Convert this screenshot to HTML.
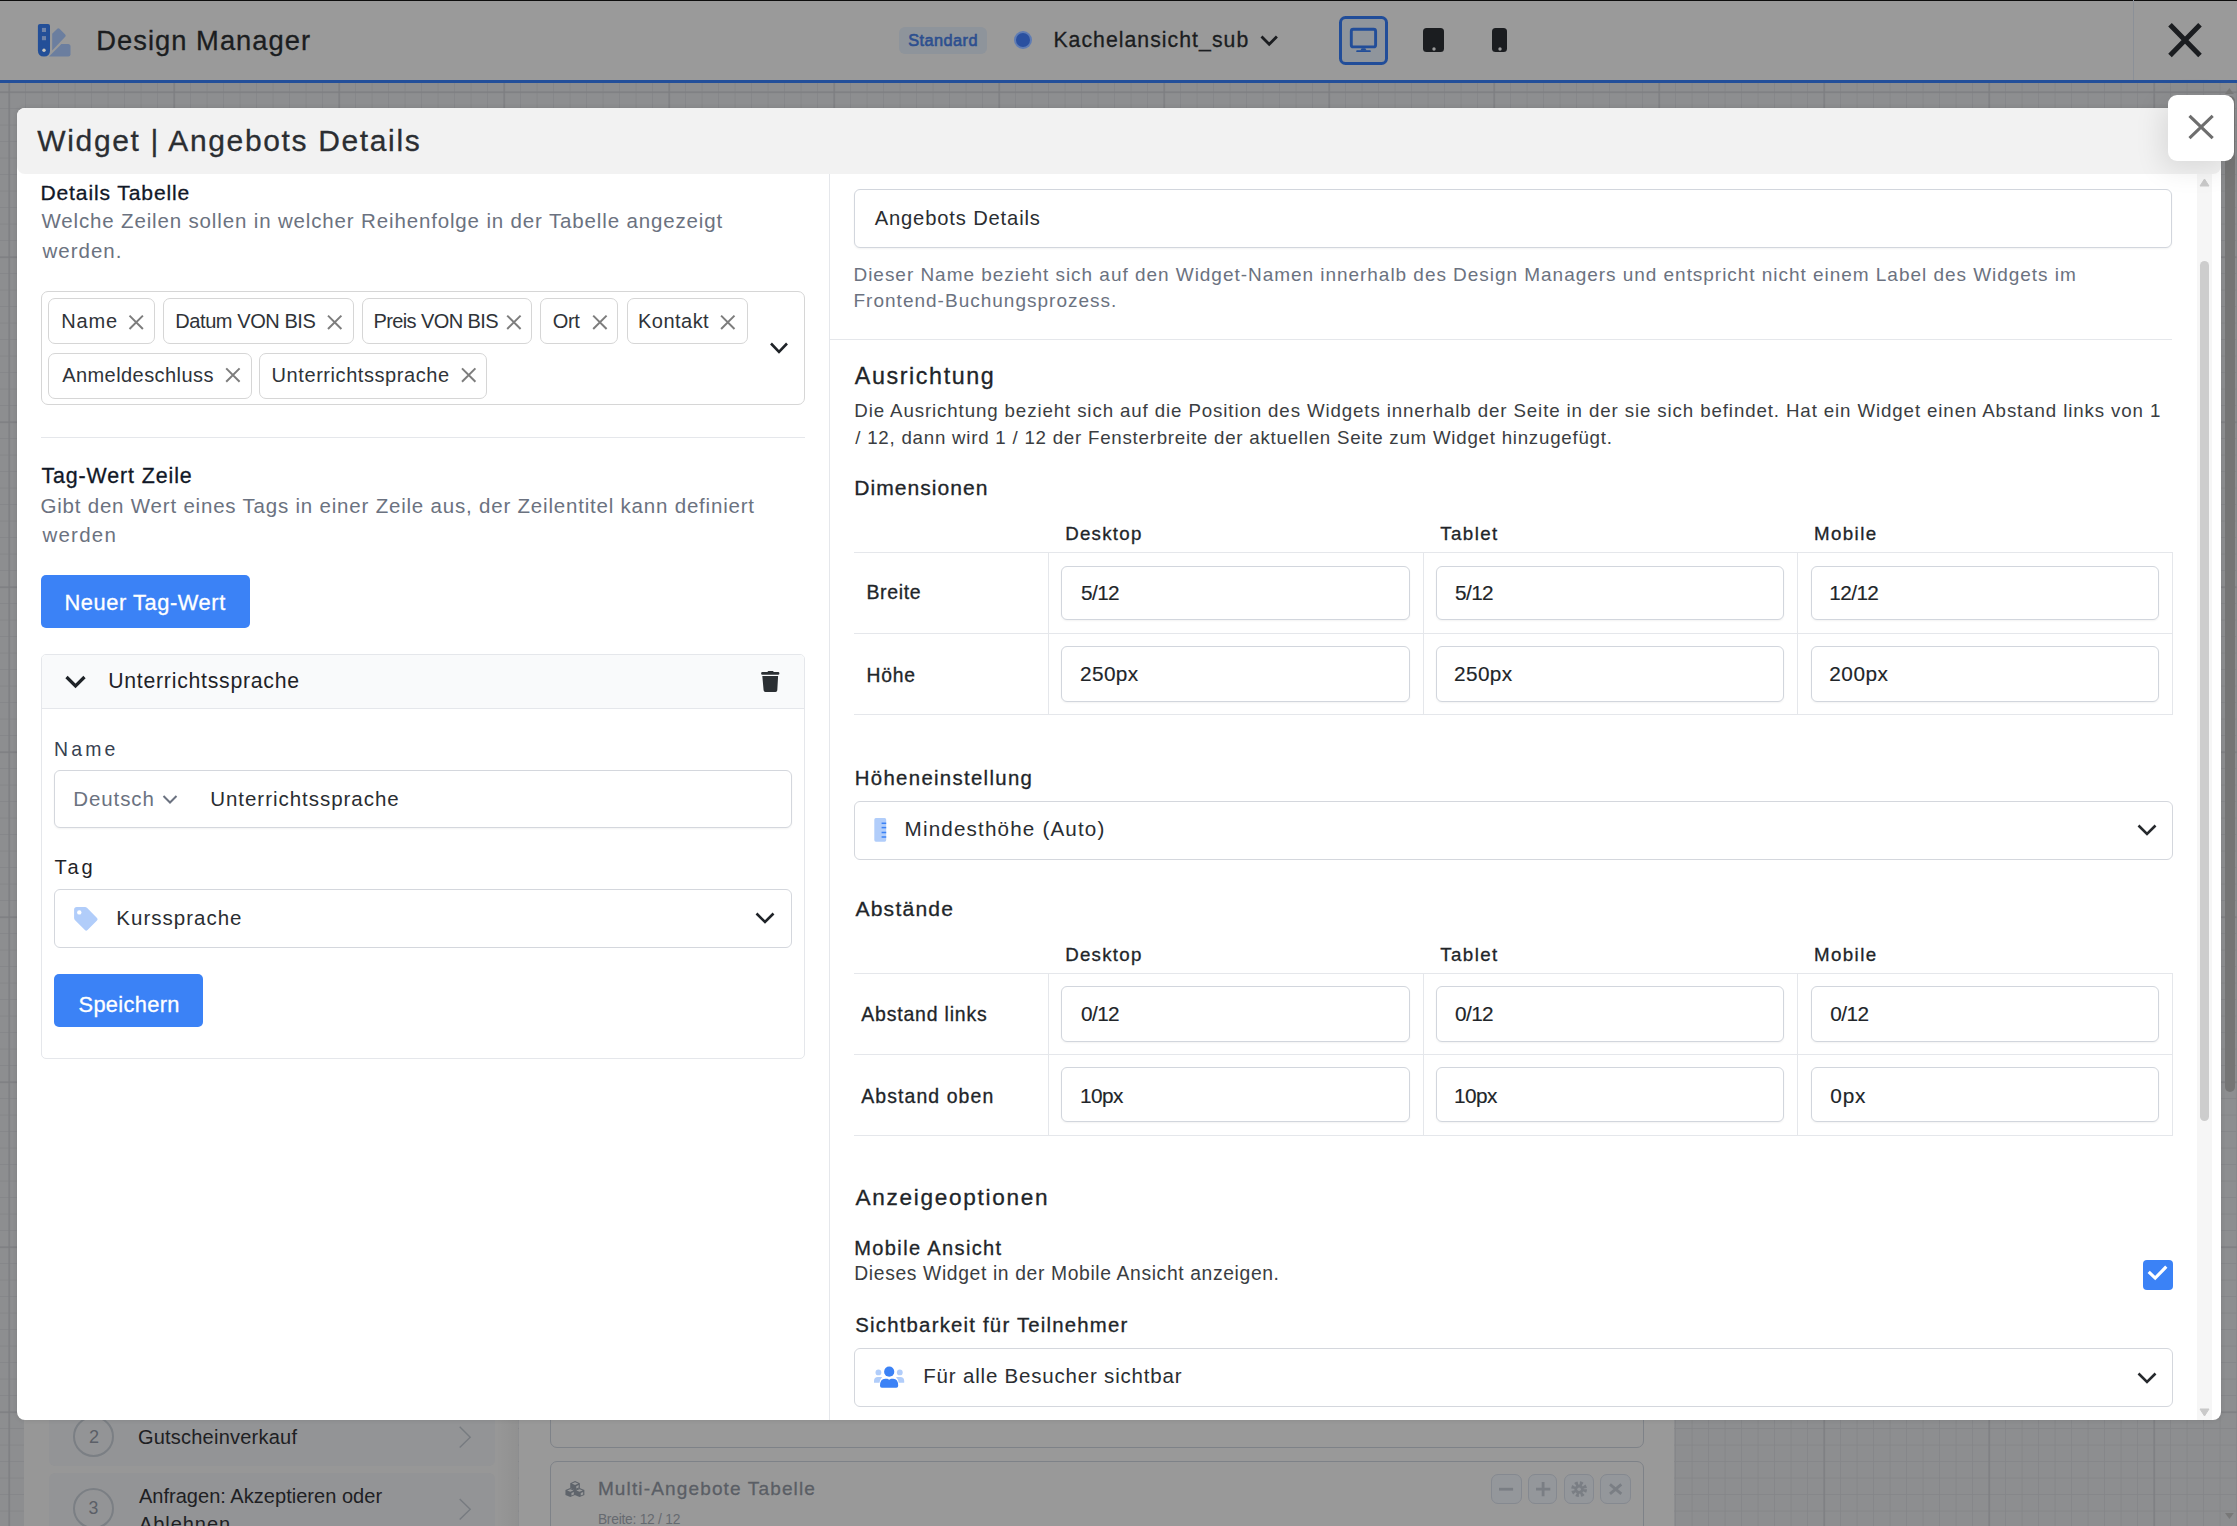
<!DOCTYPE html>
<html><head><meta charset="utf-8">
<style>
html,body{margin:0;padding:0;}
body{width:2237px;height:1526px;overflow:hidden;position:relative;background:#8d8e90;font-family:"Liberation Sans",sans-serif;}
.a{position:absolute;box-sizing:border-box;}
.t{position:absolute;white-space:nowrap;font-family:"Liberation Sans",sans-serif;}
svg{position:absolute;overflow:visible;}
.inp{position:absolute;box-sizing:border-box;background:#fff;border:1px solid #d2d6dd;border-radius:6px;box-shadow:0 1px 2px rgba(0,0,0,0.05);}
.chip{position:absolute;box-sizing:border-box;background:#fff;border:1px solid #d6d6d6;border-radius:7px;}
.hl{position:absolute;height:1px;background:#e5e7eb;}
.vl{position:absolute;width:1px;background:#e5e7eb;}
</style></head><body>
<!-- background grid -->
<svg width="2237" height="1526" style="left:0;top:0">
<defs>
<pattern id="gmin" x="8.6" y="91.6" width="16.5" height="16.5" patternUnits="userSpaceOnUse">
<rect x="0" y="0" width="1" height="16.5" fill="#858689"/>
<rect x="0" y="0" width="16.5" height="1" fill="#858689"/>
</pattern>
<pattern id="gmaj" x="8.6" y="91.6" width="165" height="165" patternUnits="userSpaceOnUse">
<rect x="0" y="0" width="1.2" height="165" fill="#7c7d80"/>
<rect x="0" y="0" width="165" height="1.2" fill="#7c7d80"/>
</pattern>
</defs>
<rect x="0" y="83" width="2237" height="1443" fill="url(#gmin)"/>
<rect x="0" y="83" width="2237" height="1443" fill="url(#gmaj)"/>
</svg>

<!-- background app panels (under overlay) -->
<div class="a" style="left:24px;top:110px;width:494px;height:1416px;background:#979797;"></div>
<div class="a" style="left:496px;top:110px;width:22px;height:1416px;background:linear-gradient(to right, rgba(0,0,0,0), rgba(0,0,0,0.045));"></div>
<div class="a" style="left:519px;top:110px;width:1155px;height:1416px;background:#999999;"></div>
<div class="a" style="left:48.8px;top:1380px;width:445.9px;height:85.8px;background:#939496;border-radius:6px;"></div>
<div class="a" style="left:48.8px;top:1473.3px;width:445.9px;height:100px;background:#939496;border-radius:6px;"></div>
<div class="a" style="left:73px;top:1416px;width:41px;height:41px;border:2.8px solid #7b7f84;border-radius:50%;"></div>
<div class="a" style="left:73px;top:1488px;width:41px;height:41px;border:2.8px solid #7b7f84;border-radius:50%;"></div>
<svg width="20" height="30" style="left:455px;top:1424px"><path d="M4.7 2.8 L15.2 13.2 L4.7 23.5" fill="none" stroke="#777b80" stroke-width="1.4"/></svg>
<svg width="20" height="30" style="left:455px;top:1496px"><path d="M4.7 3 L15.2 13.2 L4.7 23.4" fill="none" stroke="#777b80" stroke-width="1.4"/></svg>
<div class="a" style="left:549.8px;top:1300px;width:1093.9px;height:147.5px;border:1.3px solid #7e8288;border-radius:7px;"></div>
<div class="a" style="left:549.8px;top:1461px;width:1093.9px;height:120px;border:1.3px solid #7e8288;border-radius:7px;"></div>
<svg width="22" height="20" style="left:565px;top:1480px" viewBox="0 0 22 20"><path d="M10.05 1.00 L14.85 3.20 L14.85 8.00 L10.05 10.20 L5.25 8.00 L5.25 3.20 Z" fill="#5f646b"/><path d="M10.05 2.30 L13.25 3.60 L10.05 4.90 L6.85 3.60 Z M11.25 6.20 L13.65 5.10 L13.65 7.50 L11.25 8.60 Z" fill="#999a9b"/><path d="M5.25 7.90 L10.05 10.10 L10.05 14.90 L5.25 17.10 L0.45 14.90 L0.45 10.10 Z" fill="#5f646b"/><path d="M5.25 9.20 L8.45 10.50 L5.25 11.80 L2.05 10.50 Z M6.45 13.10 L8.85 12.00 L8.85 14.40 L6.45 15.50 Z" fill="#999a9b"/><path d="M14.55 7.90 L19.35 10.10 L19.35 14.90 L14.55 17.10 L9.75 14.90 L9.75 10.10 Z" fill="#5f646b"/><path d="M14.55 9.20 L17.75 10.50 L14.55 11.80 L11.35 10.50 Z M15.75 13.10 L18.15 12.00 L18.15 14.40 L15.75 15.50 Z" fill="#999a9b"/></svg>
<div class="a" style="left:1491.3px;top:1474px;width:30.4px;height:29.5px;border:1.3px solid #858990;border-radius:7px;background:#94979b;"></div>
<div class="a" style="left:1528.3px;top:1474px;width:29.2px;height:29.5px;border:1.3px solid #858990;border-radius:7px;background:#94979b;"></div>
<div class="a" style="left:1564.3px;top:1474px;width:29.5px;height:29.5px;border:1.3px solid #858990;border-radius:7px;background:#94979b;"></div>
<div class="a" style="left:1600.4px;top:1474px;width:30.4px;height:29.5px;border:1.3px solid #858990;border-radius:7px;background:#94979b;"></div>
<svg width="160" height="40" style="left:1480px;top:1470px">
<g stroke="#7a7e84" stroke-width="2.8" fill="none" stroke-linecap="butt">
<path d="M19 19.2 H33.1"/>
<path d="M63.1 12 V26.2 M56 19.1 H70.3"/>
<path d="M130 14.4 L141.3 23.8 M141.3 14.4 L130 23.8"/>
</g>
<circle cx="99.1" cy="19.2" r="5.6" fill="none" stroke="#7a7e84" stroke-width="4.6" stroke-dasharray="2.6 1.8"/>
<circle cx="99.1" cy="19.2" r="4.6" fill="#7a7e84"/>
<circle cx="99.1" cy="19.2" r="1.8" fill="#94979b"/>
</svg>

<!-- page scrollbar -->
<div class="a" style="left:2225px;top:96px;width:10px;height:996px;background:#757575;border-radius:5px;"></div>
<svg width="16" height="10" style="left:2221px;top:87px"><path d="M4 7 L8.4 1 L12.8 7 Z" fill="#787878"/></svg>
<svg width="16" height="10" style="left:2221px;top:1512px"><path d="M4 1 L8.4 7 L12.8 1 Z" fill="#787878"/></svg>

<!-- top header bar -->
<div class="a" style="left:0;top:0;width:2237px;height:80px;background:#9a9a9a;"></div>
<div class="a" style="left:0;top:0;width:2237px;height:1.4px;background:#0d0d0d;"></div>
<div class="a" style="left:0;top:80px;width:2237px;height:3px;background:#234f9a;"></div>
<div class="a" style="left:2133px;top:0;width:1px;height:80px;background:#8b9097;"></div>
<svg width="40" height="40" style="left:2165px;top:20px"><path d="M5 4.7 L35 35.4 M35 4.7 L5 35.4" stroke="#1b1d20" stroke-width="5" fill="none"/></svg>
<!-- logo -->
<svg width="40" height="40" style="left:35px;top:20px" viewBox="0 0 40 40">
<path d="M17.2 13.8 L22.3 8.7 Q23.4 7.6 24.5 8.7 L30.2 14.4 Q31.3 15.6 30.2 16.8 L17.2 30.6 Z" fill="#6b7e9f"/>
<path d="M26.4 24.1 L33 24.1 Q35.5 24.1 35.5 26.6 L35.5 34.2 Q35.5 36.4 33.3 36.4 L14 36.4 Z" fill="#6b7e9f"/>
<path d="M5 3.9 L13 3.9 Q15 3.9 15 5.9 L15 30.4 Q15 36.4 9 36.4 Q2.9 36.4 2.9 30.4 L2.9 5.9 Q2.9 3.9 5 3.9 Z" fill="#234f98"/>
<rect x="6.95" y="7.9" width="4.05" height="4.1" fill="#6f83a8"/>
<rect x="6.95" y="16.1" width="4.05" height="4.1" fill="#6f83a8"/>
<circle cx="9" cy="30.3" r="1.7" fill="#c9c6bd"/>
</svg>
<!-- standard badge, dot, dropdown -->
<div class="a" style="left:899.2px;top:27px;width:87.4px;height:26.6px;background:#8e949b;border-radius:6px;"></div>
<div class="a" style="left:1014.4px;top:31.2px;width:18px;height:18px;border-radius:50%;background:#5f7cb4;"></div>
<div class="a" style="left:1016.4px;top:33.2px;width:14px;height:14px;border-radius:50%;background:#2a50a0;"></div>
<svg width="24" height="16" style="left:1258px;top:33px"><path d="M3.5 3.5 L11.2 11.2 L18.9 3.5" fill="none" stroke="#1b1d20" stroke-width="2.8"/></svg>
<!-- device buttons -->
<div class="a" style="left:1339px;top:16px;width:49px;height:49px;border:3px solid #214d99;border-radius:6.5px;background:#8f959c;"></div>
<svg width="40" height="40" style="left:1344px;top:24px">
<rect x="7.3" y="5.3" width="24.3" height="17.6" rx="2" fill="none" stroke="#214d99" stroke-width="2.9"/>
<path d="M17.6 24.2 L21.3 24.2 L22.5 26.6 L16.4 26.6 Z" fill="#214d99"/>
<rect x="12.2" y="26.2" width="14.6" height="1.9" rx="0.9" fill="#214d99"/>
</svg>
<div class="a" style="left:1423px;top:28px;width:21px;height:24px;background:#1b1d20;border-radius:3.5px;"></div>
<svg width="10" height="10" style="left:1428.6px;top:44px"><circle cx="5" cy="5" r="1.7" fill="#9a9a9a"/></svg>
<div class="a" style="left:1492px;top:28px;width:15px;height:24px;background:#1b1d20;border-radius:3.5px;"></div>
<svg width="10" height="10" style="left:1494.5px;top:44px"><circle cx="5" cy="5" r="1.7" fill="#9a9a9a"/></svg>

<!-- modal -->
<div class="a" style="left:17px;top:108px;width:2204px;height:1312px;background:#fff;border-radius:8px;box-shadow:0 0 5px rgba(0,0,0,0.10);"></div>
<div class="a" style="left:17px;top:108px;width:2204px;height:65.5px;background:#f2f2f2;border-radius:8px;"></div>
<!-- modal right column divider -->
<div class="vl" style="left:829px;top:173.5px;height:1246.5px;"></div>
<!-- modal scrollbar -->
<div class="a" style="left:2197px;top:173.5px;width:15px;height:1246px;background:#f6f6f6;"></div>
<div class="a" style="left:2200px;top:261px;width:9px;height:860px;background:#cdcdcd;border-radius:4.5px;"></div>
<svg width="15" height="12" style="left:2197px;top:176px"><path d="M3 10 L7.5 3 L12 10 Z" fill="#c9c9c9" stroke="#c9c9c9" stroke-width="1" stroke-linejoin="round"/></svg>
<svg width="15" height="12" style="left:2197px;top:1406px"><path d="M3 3 L7.5 10 L12 3 Z" fill="#c9c9c9" stroke="#c9c9c9" stroke-width="1" stroke-linejoin="round"/></svg>

<!-- LEFT COLUMN -->
<div class="a" style="left:41.3px;top:291.3px;width:763.4px;height:114px;border:1px solid #d6d6d6;border-radius:7px;"></div>
<div class="chip" style="left:48.4px;top:298.4px;width:106.9px;height:46px;"></div>
<div class="chip" style="left:162.5px;top:298.4px;width:191.2px;height:46px;"></div>
<div class="chip" style="left:361.8px;top:298.4px;width:170.5px;height:46px;"></div>
<div class="chip" style="left:540.3px;top:298.4px;width:78.1px;height:46px;"></div>
<div class="chip" style="left:626.5px;top:298.4px;width:121.1px;height:46px;"></div>
<div class="chip" style="left:48.4px;top:352.6px;width:203.3px;height:46px;"></div>
<div class="chip" style="left:259.2px;top:352.6px;width:228.3px;height:46px;"></div>
<svg width="820" height="120" style="left:0;top:290px">
<g stroke="#7d7d7d" stroke-width="2" fill="none">
<path d="M129.5 25.6 L142.9 39 M142.9 25.6 L129.5 39"/>
<path d="M328 25.6 L341.4 39 M341.4 25.6 L328 39"/>
<path d="M507.2 25.6 L520.6 39 M520.6 25.6 L507.2 39"/>
<path d="M593.2 25.6 L606.6 39 M606.6 25.6 L593.2 39"/>
<path d="M721.1 25.6 L734.5 39 M734.5 25.6 L721.1 39"/>
<path d="M226.2 78.4 L239.6 91.8 M239.6 78.4 L226.2 91.8"/>
<path d="M462 78.4 L475.4 91.8 M475.4 78.4 L462 91.8"/>
</g>
<path d="M771 53.5 L779 61.8 L787 53.5" fill="none" stroke="#1f2328" stroke-width="2.6"/>
</svg>
<div class="hl" style="left:41px;top:437px;width:764px;"></div>
<div class="a" style="left:41px;top:575.3px;width:209px;height:53.1px;background:#3b82f6;border-radius:5px;"></div>
<!-- accordion -->
<div class="a" style="left:41.4px;top:654.3px;width:763.2px;height:405px;border:1px solid #e5e7eb;border-radius:5px;"></div>
<div class="a" style="left:42.4px;top:655.3px;width:761.2px;height:54px;background:#f9fafb;border-bottom:1px solid #e5e7eb;border-radius:4px 4px 0 0;"></div>
<svg width="30" height="20" style="left:60px;top:672px"><path d="M6.5 5 L15.5 14 L24.5 5" fill="none" stroke="#1f2328" stroke-width="3.2"/></svg>
<svg width="24" height="26" style="left:758px;top:669px" viewBox="0 0 24 26">
<path d="M9.3 3.1 L10.3 2.1 L14.9 2.1 L15.9 3.1 L20.1 3.1 Q21.4 3.1 21.4 4.4 Q21.4 5.75 20.1 5.75 L4.4 5.75 Q3.1 5.75 3.1 4.4 Q3.1 3.1 4.4 3.1 Z" fill="#2b2f33"/>
<path d="M4.3 7.1 L20.1 7.1 L19.3 21.3 Q19.2 23 17.5 23 L7.4 23 Q5.7 23 5.6 21.3 Z" fill="#2b2f33"/>
</svg>
<div class="inp" style="left:54.2px;top:770px;width:737.6px;height:58.3px;border-color:#d4d7dd;"></div>
<svg width="20" height="14" style="left:160px;top:792px"><path d="M3.5 4 L10 10.5 L16.5 4" fill="none" stroke="#6b7280" stroke-width="2"/></svg>
<div class="inp" style="left:54.2px;top:889.3px;width:737.6px;height:58.9px;border-color:#d4d7dd;box-shadow:none;"></div>
<svg width="28" height="28" style="left:72px;top:905px" viewBox="0 0 28 28">
<path d="M2.1 4.8 Q2.1 2.1 4.8 2.1 L12.9 2.1 Q14.2 2.1 15.2 3.1 L25 12.9 Q26.3 14.2 25 15.5 L15.5 25 Q14.2 26.3 12.9 25 L3.1 15.2 Q2.1 14.2 2.1 12.9 Z" fill="#b1cdfa"/>
<circle cx="7.3" cy="7.4" r="2.2" fill="#fff"/>
</svg>
<svg width="26" height="16" style="left:752px;top:910px"><path d="M4.5 3.5 L13 12 L21.5 3.5" fill="none" stroke="#1f2328" stroke-width="2.6"/></svg>
<div class="a" style="left:54.2px;top:974.1px;width:148.6px;height:53.2px;background:#3b82f6;border-radius:5px;"></div>

<!-- RIGHT COLUMN -->
<div class="inp" style="left:854.3px;top:189.4px;width:1318.2px;height:58.2px;"></div>
<div class="hl" style="left:829px;top:339px;width:1343px;"></div>
<!-- table 1 -->
<div class="hl" style="left:854px;top:552.3px;width:1318.5px;"></div>
<div class="hl" style="left:854px;top:633.2px;width:1318.5px;"></div>
<div class="hl" style="left:854px;top:714.2px;width:1318.5px;"></div>
<div class="vl" style="left:1047.7px;top:552.3px;height:162.4px;"></div>
<div class="vl" style="left:1423.2px;top:552.3px;height:162.4px;"></div>
<div class="vl" style="left:1796.9px;top:552.3px;height:162.4px;"></div>
<div class="vl" style="left:2171.8px;top:552.3px;height:162.4px;"></div>
<div class="inp" style="left:1061.2px;top:565.7px;width:349.2px;height:54.7px;"></div>
<div class="inp" style="left:1436px;top:565.7px;width:348.4px;height:54.7px;"></div>
<div class="inp" style="left:1811px;top:565.7px;width:348.4px;height:54.7px;"></div>
<div class="inp" style="left:1061.2px;top:646.4px;width:349.2px;height:55.2px;"></div>
<div class="inp" style="left:1436px;top:646.4px;width:348.4px;height:55.2px;"></div>
<div class="inp" style="left:1811px;top:646.4px;width:348.4px;height:55.2px;"></div>
<!-- hoeheneinstellung select -->
<div class="inp" style="left:854.2px;top:800.5px;width:1318.8px;height:59.2px;border-color:#d4d7dd;box-shadow:none;"></div>
<svg width="16" height="28" style="left:872px;top:816px" viewBox="0 0 16 28">
<rect x="2.3" y="2.1" width="11.9" height="23.6" rx="1.6" fill="#b1cdfa"/>
<g fill="#3b82f6"><rect x="9.6" y="6.55" width="4.6" height="1.5"/><rect x="9.6" y="10.85" width="4.6" height="1.5"/><rect x="9.6" y="15.75" width="4.6" height="1.5"/><rect x="9.6" y="20.25" width="4.6" height="1.5"/></g>
</svg>
<svg width="26" height="16" style="left:2134px;top:822px"><path d="M4.5 3.5 L13 12 L21.5 3.5" fill="none" stroke="#26292d" stroke-width="2.6"/></svg>
<!-- table 2 -->
<div class="hl" style="left:854px;top:973px;width:1318.5px;"></div>
<div class="hl" style="left:854px;top:1054px;width:1318.5px;"></div>
<div class="hl" style="left:854px;top:1134.8px;width:1318.5px;"></div>
<div class="vl" style="left:1047.7px;top:973px;height:162.4px;"></div>
<div class="vl" style="left:1423.2px;top:973px;height:162.4px;"></div>
<div class="vl" style="left:1796.9px;top:973px;height:162.4px;"></div>
<div class="vl" style="left:2171.8px;top:973px;height:162.4px;"></div>
<div class="inp" style="left:1061.2px;top:986.4px;width:349.2px;height:55.4px;"></div>
<div class="inp" style="left:1436px;top:986.4px;width:348.4px;height:55.4px;"></div>
<div class="inp" style="left:1811px;top:986.4px;width:348.4px;height:55.4px;"></div>
<div class="inp" style="left:1061.2px;top:1067.1px;width:349.2px;height:55.4px;"></div>
<div class="inp" style="left:1436px;top:1067.1px;width:348.4px;height:55.4px;"></div>
<div class="inp" style="left:1811px;top:1067.1px;width:348.4px;height:55.4px;"></div>
<!-- checkbox -->
<div class="a" style="left:2143.1px;top:1260.2px;width:29.5px;height:29.5px;background:#3b82f6;border-radius:4px;"></div>
<svg width="30" height="30" style="left:2143.1px;top:1260.2px"><path d="M5.7 11.9 L12.2 18.1 L23.3 6.7" fill="none" stroke="#fff" stroke-width="3.2"/></svg>
<!-- sichtbarkeit select -->
<div class="inp" style="left:854.2px;top:1347.7px;width:1318.8px;height:59.5px;border-color:#d4d7dd;box-shadow:none;"></div>
<svg width="34" height="24" style="left:872px;top:1365px" viewBox="0 0 34 24">
<g fill="#b1cdfa"><circle cx="6.4" cy="7.4" r="2.9"/><circle cx="27.8" cy="7.4" r="2.9"/>
<path d="M2 17.7 L2 16 Q2 12.1 6 12.1 L10.2 12.1 Q8 14.5 7.5 17.7 Z"/>
<path d="M32.2 17.7 L32.2 16 Q32.2 12.1 28.2 12.1 L24 12.1 Q26.2 14.5 26.7 17.7 Z"/></g>
<g fill="#3b82f6"><circle cx="17.2" cy="6.7" r="5.1"/>
<path d="M8 20.8 Q8 13.7 13.2 13.7 L15.4 13.7 L17.2 14.7 L19 13.7 L21.2 13.7 Q26.2 13.7 26.2 20.8 Q26.2 22.7 24.3 22.7 L9.9 22.7 Q8 22.7 8 20.8 Z"/></g>
</svg>
<svg width="26" height="16" style="left:2134px;top:1370px"><path d="M4.5 3.5 L13 12 L21.5 3.5" fill="none" stroke="#26292d" stroke-width="2.6"/></svg>

<!-- close button -->
<div class="a" style="left:2168px;top:94.5px;width:66px;height:66px;background:#fff;border-radius:9px;box-shadow:-6px 8px 28px rgba(0,0,0,0.10);"></div>
<svg width="40" height="40" style="left:2181px;top:107px"><path d="M9.6 9.9 L30.6 30.1 M30.6 9.9 L9.6 30.1" stroke="#6e6e6e" stroke-width="3.1" fill="none" stroke-linecap="square"/></svg>

<div class="t" style="left:96.30px;top:26.67px;font-size:27.33px;line-height:27.33px;color:#1b1d20;letter-spacing:1.022px;-webkit-text-stroke:0.3px #1b1d20;">Design Manager</div>
<div class="t" style="left:908.30px;top:32.01px;font-size:16.34px;line-height:16.34px;color:#2c4f8f;letter-spacing:0.416px;-webkit-text-stroke:0.6px #2c4f8f;">Standard</div>
<div class="t" style="left:1053.40px;top:29.85px;font-size:21.24px;line-height:21.24px;color:#1b1d20;letter-spacing:1.035px;-webkit-text-stroke:0.3px #1b1d20;">Kachelansicht_sub</div>
<div class="t" style="left:37.30px;top:126.09px;font-size:30.01px;line-height:30.01px;color:#2b2e32;letter-spacing:1.644px;-webkit-text-stroke:0.3px #2b2e32;">Widget | Angebots Details</div>
<div class="t" style="left:40.40px;top:182.07px;font-size:21.09px;line-height:21.09px;color:#111827;letter-spacing:0.875px;-webkit-text-stroke:0.3px #111827;">Details Tabelle</div>
<div class="t" style="left:41.40px;top:211.17px;font-size:20.5px;line-height:20.5px;color:#6b7280;letter-spacing:0.851px;">Welche Zeilen sollen in welcher Reihenfolge in der Tabelle angezeigt</div>
<div class="t" style="left:42.40px;top:240.77px;font-size:20.5px;line-height:20.5px;color:#6b7280;letter-spacing:1.027px;">werden.</div>
<div class="t" style="left:61.20px;top:311.26px;font-size:20.05px;line-height:20.05px;color:#2f3338;letter-spacing:0.802px;">Name</div>
<div class="t" style="left:175.30px;top:311.26px;font-size:20.05px;line-height:20.05px;color:#2f3338;letter-spacing:-0.439px;">Datum VON BIS</div>
<div class="t" style="left:373.40px;top:311.26px;font-size:20.05px;line-height:20.05px;color:#2f3338;letter-spacing:-0.600px;">Preis VON BIS</div>
<div class="t" style="left:552.80px;top:311.26px;font-size:20.05px;line-height:20.05px;color:#2f3338;letter-spacing:-0.376px;">Ort</div>
<div class="t" style="left:638.00px;top:311.26px;font-size:20.05px;line-height:20.05px;color:#2f3338;letter-spacing:0.456px;">Kontakt</div>
<div class="t" style="left:62.20px;top:364.86px;font-size:20.05px;line-height:20.05px;color:#2f3338;letter-spacing:0.413px;">Anmeldeschluss</div>
<div class="t" style="left:271.60px;top:364.86px;font-size:20.05px;line-height:20.05px;color:#2f3338;letter-spacing:0.555px;">Unterrichtssprache</div>
<div class="t" style="left:41.40px;top:466.02px;font-size:21.39px;line-height:21.39px;color:#111827;letter-spacing:0.901px;-webkit-text-stroke:0.3px #111827;">Tag-Wert Zeile</div>
<div class="t" style="left:40.40px;top:496.27px;font-size:20.5px;line-height:20.5px;color:#6b7280;letter-spacing:0.800px;">Gibt den Wert eines Tags in einer Zeile aus, der Zeilentitel kann definiert</div>
<div class="t" style="left:42.40px;top:525.18px;font-size:20.5px;line-height:20.5px;color:#6b7280;letter-spacing:1.253px;">werden</div>
<div class="t" style="left:64.40px;top:591.84px;font-size:21.84px;line-height:21.84px;color:#ffffff;letter-spacing:0.585px;-webkit-text-stroke:0.3px #ffffff;">Neuer Tag-Wert</div>
<div class="t" style="left:108.20px;top:670.55px;font-size:21.24px;line-height:21.24px;color:#1f2328;letter-spacing:0.748px;">Unterrichtssprache</div>
<div class="t" style="left:54.00px;top:740.16px;font-size:19.46px;line-height:19.46px;color:#374151;letter-spacing:3.154px;">Name</div>
<div class="t" style="left:73.20px;top:789.38px;font-size:20.5px;line-height:20.5px;color:#6b7280;letter-spacing:0.916px;">Deutsch</div>
<div class="t" style="left:210.20px;top:789.38px;font-size:20.5px;line-height:20.5px;color:#2a2d31;letter-spacing:0.968px;">Unterrichtssprache</div>
<div class="t" style="left:54.60px;top:857.36px;font-size:20.05px;line-height:20.05px;color:#1f2328;letter-spacing:2.922px;">Tag</div>
<div class="t" style="left:116.30px;top:908.28px;font-size:20.5px;line-height:20.5px;color:#2a2d31;letter-spacing:1.012px;">Kurssprache</div>
<div class="t" style="left:78.50px;top:994.14px;font-size:21.84px;line-height:21.84px;color:#ffffff;letter-spacing:0.331px;-webkit-text-stroke:0.3px #ffffff;">Speichern</div>
<div class="t" style="left:874.70px;top:208.43px;font-size:20.2px;line-height:20.2px;color:#2a2d31;letter-spacing:0.838px;">Angebots Details</div>
<div class="t" style="left:853.50px;top:264.64px;font-size:19.01px;line-height:19.01px;color:#6b7280;letter-spacing:0.964px;">Dieser Name bezieht sich auf den Widget-Namen innerhalb des Design Managers und entspricht nicht einem Label des Widgets im</div>
<div class="t" style="left:853.50px;top:291.24px;font-size:19.01px;line-height:19.01px;color:#6b7280;letter-spacing:1.008px;">Frontend-Buchungsprozess.</div>
<div class="t" style="left:854.80px;top:365.18px;font-size:23.32px;line-height:23.32px;color:#212529;letter-spacing:1.586px;-webkit-text-stroke:0.3px #212529;">Ausrichtung</div>
<div class="t" style="left:854.30px;top:401.79px;font-size:18.72px;line-height:18.72px;color:#3a3d41;letter-spacing:0.881px;">Die Ausrichtung bezieht sich auf die Position des Widgets innerhalb der Seite in der sie sich befindet. Hat ein Widget einen Abstand links von 1</div>
<div class="t" style="left:855.30px;top:428.89px;font-size:18.72px;line-height:18.72px;color:#3a3d41;letter-spacing:0.761px;">/ 12, dann wird 1 / 12 der Fensterbreite der aktuellen Seite zum Widget hinzugefügt.</div>
<div class="t" style="left:854.20px;top:476.97px;font-size:21.09px;line-height:21.09px;color:#212529;letter-spacing:1.020px;-webkit-text-stroke:0.3px #212529;">Dimensionen</div>
<div class="t" style="left:1065.20px;top:524.99px;font-size:18.72px;line-height:18.72px;color:#212529;letter-spacing:1.248px;-webkit-text-stroke:0.3px #212529;">Desktop</div>
<div class="t" style="left:1440.20px;top:524.99px;font-size:18.72px;line-height:18.72px;color:#212529;letter-spacing:1.438px;-webkit-text-stroke:0.3px #212529;">Tablet</div>
<div class="t" style="left:1813.90px;top:524.99px;font-size:18.72px;line-height:18.72px;color:#212529;letter-spacing:1.441px;-webkit-text-stroke:0.3px #212529;">Mobile</div>
<div class="t" style="left:866.40px;top:583.36px;font-size:19.46px;line-height:19.46px;color:#212529;letter-spacing:0.687px;-webkit-text-stroke:0.3px #212529;">Breite</div>
<div class="t" style="left:1081.00px;top:582.52px;font-size:20.8px;line-height:20.8px;color:#212529;letter-spacing:-0.600px;-webkit-text-stroke:0.15px #212529;">5/12</div>
<div class="t" style="left:1455.00px;top:582.52px;font-size:20.8px;line-height:20.8px;color:#212529;letter-spacing:-0.600px;-webkit-text-stroke:0.15px #212529;">5/12</div>
<div class="t" style="left:1829.30px;top:582.52px;font-size:20.8px;line-height:20.8px;color:#212529;letter-spacing:-0.600px;-webkit-text-stroke:0.15px #212529;">12/12</div>
<div class="t" style="left:866.40px;top:665.59px;font-size:19.31px;line-height:19.31px;color:#212529;letter-spacing:0.800px;-webkit-text-stroke:0.3px #212529;">Höhe</div>
<div class="t" style="left:1080.00px;top:664.42px;font-size:20.8px;line-height:20.8px;color:#212529;letter-spacing:0.384px;-webkit-text-stroke:0.15px #212529;">250px</div>
<div class="t" style="left:1454.00px;top:664.42px;font-size:20.8px;line-height:20.8px;color:#212529;letter-spacing:0.384px;-webkit-text-stroke:0.15px #212529;">250px</div>
<div class="t" style="left:1829.30px;top:664.42px;font-size:20.8px;line-height:20.8px;color:#212529;letter-spacing:0.509px;-webkit-text-stroke:0.15px #212529;">200px</div>
<div class="t" style="left:854.80px;top:768.30px;font-size:20.35px;line-height:20.35px;color:#212529;letter-spacing:1.326px;-webkit-text-stroke:0.3px #212529;">Höheneinstellung</div>
<div class="t" style="left:904.60px;top:819.25px;font-size:20.65px;line-height:20.65px;color:#2a2d31;letter-spacing:1.155px;">Mindesthöhe (Auto)</div>
<div class="t" style="left:855.40px;top:897.77px;font-size:21.09px;line-height:21.09px;color:#212529;letter-spacing:1.222px;-webkit-text-stroke:0.3px #212529;">Abstände</div>
<div class="t" style="left:1065.20px;top:946.19px;font-size:18.72px;line-height:18.72px;color:#212529;letter-spacing:1.248px;-webkit-text-stroke:0.3px #212529;">Desktop</div>
<div class="t" style="left:1440.20px;top:946.19px;font-size:18.72px;line-height:18.72px;color:#212529;letter-spacing:1.438px;-webkit-text-stroke:0.3px #212529;">Tablet</div>
<div class="t" style="left:1813.90px;top:946.19px;font-size:18.72px;line-height:18.72px;color:#212529;letter-spacing:1.441px;-webkit-text-stroke:0.3px #212529;">Mobile</div>
<div class="t" style="left:861.30px;top:1004.96px;font-size:19.46px;line-height:19.46px;color:#212529;letter-spacing:0.817px;-webkit-text-stroke:0.3px #212529;">Abstand links</div>
<div class="t" style="left:1081.00px;top:1003.82px;font-size:20.8px;line-height:20.8px;color:#212529;letter-spacing:-0.600px;-webkit-text-stroke:0.15px #212529;">0/12</div>
<div class="t" style="left:1455.00px;top:1003.82px;font-size:20.8px;line-height:20.8px;color:#212529;letter-spacing:-0.600px;-webkit-text-stroke:0.15px #212529;">0/12</div>
<div class="t" style="left:1830.30px;top:1003.82px;font-size:20.8px;line-height:20.8px;color:#212529;letter-spacing:-0.600px;-webkit-text-stroke:0.15px #212529;">0/12</div>
<div class="t" style="left:861.30px;top:1086.96px;font-size:19.46px;line-height:19.46px;color:#212529;letter-spacing:1.086px;-webkit-text-stroke:0.3px #212529;">Abstand oben</div>
<div class="t" style="left:1080.00px;top:1085.82px;font-size:20.8px;line-height:20.8px;color:#212529;letter-spacing:-0.600px;-webkit-text-stroke:0.15px #212529;">10px</div>
<div class="t" style="left:1454.00px;top:1085.82px;font-size:20.8px;line-height:20.8px;color:#212529;letter-spacing:-0.600px;-webkit-text-stroke:0.15px #212529;">10px</div>
<div class="t" style="left:1830.30px;top:1085.82px;font-size:20.8px;line-height:20.8px;color:#212529;letter-spacing:0.784px;-webkit-text-stroke:0.15px #212529;">0px</div>
<div class="t" style="left:855.50px;top:1187.01px;font-size:22.58px;line-height:22.58px;color:#212529;letter-spacing:1.710px;-webkit-text-stroke:0.3px #212529;">Anzeigeoptionen</div>
<div class="t" style="left:854.30px;top:1237.66px;font-size:20.05px;line-height:20.05px;color:#212529;letter-spacing:1.362px;-webkit-text-stroke:0.3px #212529;">Mobile Ansicht</div>
<div class="t" style="left:854.30px;top:1264.29px;font-size:19.31px;line-height:19.31px;color:#3a3d41;letter-spacing:0.632px;">Dieses Widget in der Mobile Ansicht anzeigen.</div>
<div class="t" style="left:855.30px;top:1315.40px;font-size:20.35px;line-height:20.35px;color:#212529;letter-spacing:1.213px;-webkit-text-stroke:0.3px #212529;">Sichtbarkeit für Teilnehmer</div>
<div class="t" style="left:923.30px;top:1366.28px;font-size:20.5px;line-height:20.5px;color:#2a2d31;letter-spacing:0.804px;">Für alle Besucher sichtbar</div>
<div class="t" style="left:88.90px;top:1427.80px;font-size:18.12px;line-height:18.12px;color:#5b5f67;">2</div>
<div class="t" style="left:137.90px;top:1426.66px;font-size:20.05px;line-height:20.05px;color:#1e2023;letter-spacing:0.212px;">Gutscheinverkauf</div>
<div class="t" style="left:88.50px;top:1500.47px;font-size:17.68px;line-height:17.68px;color:#5b5f67;">3</div>
<div class="t" style="left:138.90px;top:1486.26px;font-size:20.05px;line-height:20.05px;color:#1e2023;letter-spacing:0.016px;">Anfragen: Akzeptieren oder</div>
<div class="t" style="left:138.90px;top:1513.66px;font-size:20.05px;line-height:20.05px;color:#1e2023;letter-spacing:0.941px;">Ablehnen</div>
<div class="t" style="left:597.90px;top:1478.54px;font-size:19.01px;line-height:19.01px;color:#5a5e65;letter-spacing:1.147px;-webkit-text-stroke:0.3px #5a5e65;">Multi-Angebote Tabelle</div>
<div class="t" style="left:597.90px;top:1512.95px;font-size:13.82px;line-height:13.82px;color:#666a70;letter-spacing:-0.251px;">Breite: 12 / 12</div>
</body></html>
